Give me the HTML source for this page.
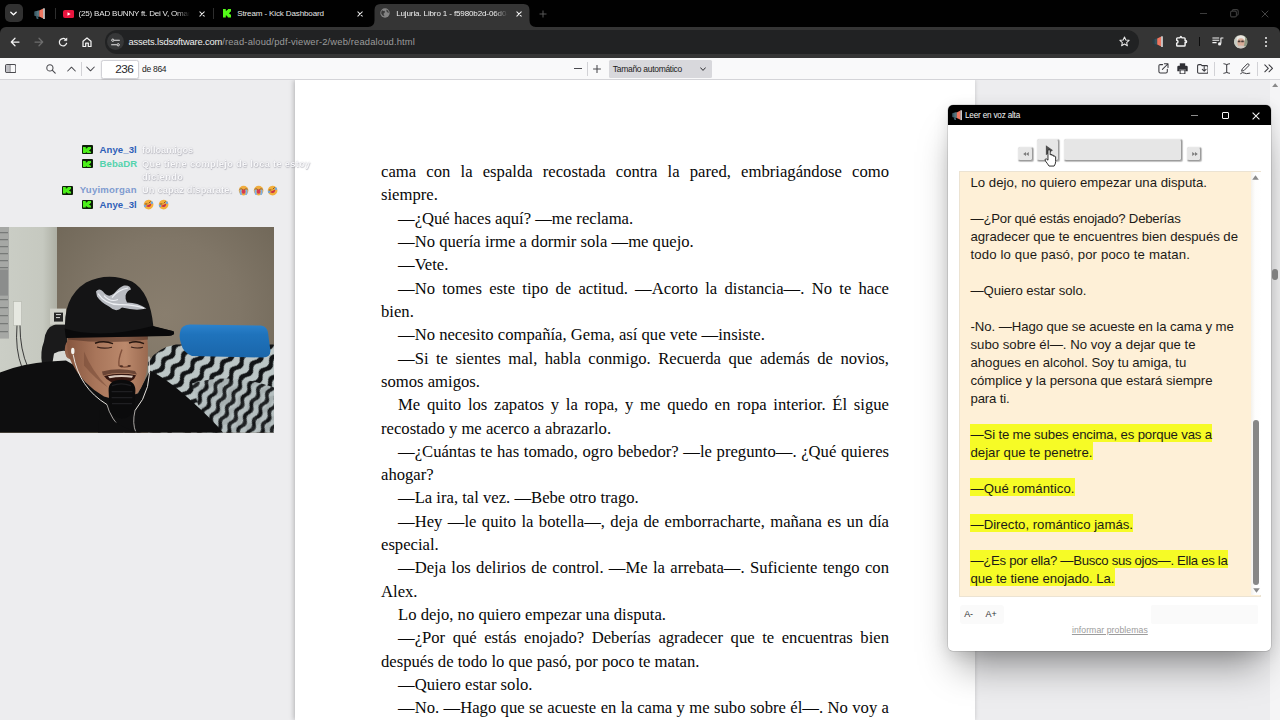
<!DOCTYPE html>
<html lang="es">
<head>
<meta charset="utf-8">
<title>Lujuria. Libro 1</title>
<style>
*{box-sizing:border-box;margin:0;padding:0}
html,body{width:1280px;height:720px;overflow:hidden;background:#ededef;font-family:"Liberation Sans",sans-serif;}
.abs{position:absolute}
#tabbar{position:absolute;left:0;top:0;width:1280px;height:36px;background:#010101;}
#toolbar{position:absolute;left:0;top:27px;width:1280px;height:30.6px;background:#353535;border-radius:6px 6px 0 0;z-index:3;}
#urlpill{position:absolute;left:105.3px;top:3.1px;width:1033.4px;height:23.6px;border-radius:12px;background:#212223;}
#pdfbar{position:absolute;left:0;top:57px;width:1280px;height:22.6px;background:#f9f9fa;border-bottom:1px solid #d4d4d8;}
#viewer{position:absolute;left:0;top:80px;width:1280px;height:640px;background:#ededef;overflow:hidden;}
#page{position:absolute;left:295px;top:0;width:680px;height:640px;background:#fff;box-shadow:-1px 0 5px rgba(0,0,0,.25);}
#ptext{position:absolute;left:86px;top:79.9px;width:508px;font-family:"Liberation Serif",serif;font-size:16.65px;line-height:23.33px;color:#080808;text-align:justify;}
#ptext p{text-indent:17px;text-align:justify;text-align-last:left;}
#ptext p.j{text-align-last:justify;}
#ptext p.n{text-indent:0}
.tabtxt{position:absolute;top:8.6px;font-size:8.05px;letter-spacing:-.14px;line-height:10px;color:#e6e6e6;white-space:nowrap;overflow:hidden;-webkit-mask-image:linear-gradient(90deg,#000 0,#000 calc(100% - 14px),transparent 100%);mask-image:linear-gradient(90deg,#000 0,#000 calc(100% - 14px),transparent 100%)}
#t2{-webkit-mask-image:none;mask-image:none}

#popup{position:absolute;left:948.4px;top:105px;width:322.7px;height:545.5px;background:#fff;border-radius:5px;box-shadow:0 0 0 .5px rgba(0,0,0,.2),0 24px 36px -10px rgba(0,0,0,.40),0 3px 16px rgba(0,0,0,.11);overflow:hidden;}
#ptitle{position:absolute;left:0;top:0;width:100%;height:20px;background:#000;}
#ta{position:absolute;left:10.3px;top:66px;width:302.6px;height:425.6px;background:#fef0d7;border:1px solid #ece3d2;}
#tatext{position:absolute;left:10.8px;top:0;font-size:13.2px;line-height:18px;color:#1c1a16;white-space:nowrap;}
#tatext div{height:18px;white-space:nowrap;width:fit-content}
#tatext div.h{background:#f6fb26;margin-left:-.5px;padding:0 .5px}
#tatext span{position:relative;top:1.8px}
#tatext div.b{height:18px}
.pbtn{position:absolute;background:#e6e6e6;border:1px solid #e8e8e8;border-right-color:#9c9c9c;border-bottom-color:#9c9c9c;border-radius:2.5px;box-shadow:.5px .5px 1px rgba(0,0,0,.25)}

.kb{position:absolute;width:11px;height:9px;background:#0d1f08;border-radius:1px}
.kb svg{position:absolute;left:1.6px;top:1.3px}
.cn{position:absolute;font-weight:bold;font-size:9.6px;line-height:12px;white-space:nowrap;letter-spacing:.05px;text-align:right}
.cm{position:absolute;font-weight:bold;font-size:9.3px;line-height:12px;white-space:nowrap;color:#f7f7f9;text-shadow:0 0 1.2px rgba(110,110,125,.42),.4px .5px .9px rgba(110,110,125,.34);letter-spacing:-.1px;filter:blur(.35px)}
</style>
</head>
<body>
<div id="tabbar">
  <!-- tab search button -->
  <div class="abs" style="left:4.5px;top:4px;width:18px;height:18px;border-radius:5px;background:#313131"></div>
  <svg class="abs" style="left:9px;top:9px" width="9" height="9" viewBox="0 0 9 9"><path d="M1.8 3.2 L4.5 5.8 L7.2 3.2" fill="none" stroke="#fff" stroke-width="1.3" stroke-linecap="round" stroke-linejoin="round"/></svg>
  <!-- pinned megaphone -->
  <svg class="abs" style="left:34px;top:7.5px" width="12" height="12" viewBox="0 0 12 12">
    <path d="M0.3 4 Q0.3 3.3 1 3.2 L5.2 2.5 L5.2 8.7 L1 8 Q0.3 7.9 0.3 7.2 Z" fill="#3f5f6b"/>
    <path d="M2.6 2.95 L5.2 2.5 L5.2 8.7 L2.6 8.25 Z" fill="#54757f"/>
    <path d="M5.2 2.6 L9.3 0.6 L9.3 10.6 L5.2 8.6 Z" fill="#ee7660"/>
    <rect x="9.3" y="0.3" width="1.4" height="10.7" fill="#f6f6f6"/>
    <path d="M1.8 8.1 L4 8.5 L4.5 11 L2.8 11 Z" fill="#3f5f6b"/>
  </svg>
  <div class="abs" style="left:54.5px;top:8px;width:1px;height:10.5px;background:#2e2e2e"></div>
  <!-- youtube -->
  <svg class="abs" style="left:62.7px;top:9.8px" width="11.4" height="8" viewBox="0 0 114 80"><rect x="0" y="0" width="114" height="80" rx="20" fill="#e8153e"/><path d="M45 22 L45 58 L76 40 Z" fill="#fff"/></svg>
  <div class="tabtxt" id="t1" style="left:78.6px;width:111px;letter-spacing:-.21px">(25) BAD BUNNY ft. Dei V, Omar Courtz</div>
  <svg class="abs xx" style="left:198.65px;top:10.85px" width="6.1" height="6.1" viewBox="0 0 7 7"><path d="M1 1 L6 6 M6 1 L1 6" stroke="#e6e6e6" stroke-width="1.15" stroke-linecap="round"/></svg>
  <div class="abs" style="left:213.3px;top:8px;width:1px;height:10.5px;background:#2e2e2e"></div>
  <!-- kick -->
  <svg class="abs" style="left:223px;top:9.3px" width="8" height="8.4" viewBox="0 0 80 84"><path d="M0 0 H28 V18 H38 V9 H48 V0 H80 V28 H70 V37 H60 V47 H70 V56 H80 V84 H48 V75 H38 V66 H28 V84 H0 Z" fill="#53fc18"/></svg>
  <div class="tabtxt" id="t2" style="left:237.2px;">Stream - Kick Dashboard</div>
  <svg class="abs xx" style="left:357.05px;top:10.85px" width="6.1" height="6.1" viewBox="0 0 7 7"><path d="M1 1 L6 6 M6 1 L1 6" stroke="#e6e6e6" stroke-width="1.15" stroke-linecap="round"/></svg>
  <!-- active tab -->
  <svg class="abs" style="left:368px;top:3px" width="168" height="24" viewBox="0 0 168 24"><path d="M0 24 Q6.5 24 6.5 17.5 V7 Q6.5 1 12.5 1 H155.5 Q161.5 1 161.5 7 V17.5 Q161.5 24 168 24 Z" fill="#353535"/></svg>
  <svg class="abs" style="left:380.3px;top:8.4px" width="10" height="10" viewBox="0 0 10 10"><circle cx="5" cy="5" r="4.7" fill="#848484"/><path d="M2.1 2.3 Q3.4 3.2 4.6 2.7 Q5.4 3.9 4.4 4.9 Q3.3 5.2 3.6 6.4 Q4.6 6.9 4.2 8.3 Q2 7.6 1.2 5.6 Q1 3.6 2.1 2.3 Z M6.4 1.4 Q8.6 2.4 8.9 4.6 Q7.6 5.2 7.2 4.0 Q6.0 3.4 6.4 1.4 Z" fill="#3a3a3a"/></svg>
  <div class="tabtxt" id="t3" style="left:396.2px;width:112px;color:#f1f1f1">Lujuria. Libro 1 - f5980b2d-06d0-4a</div>
  <svg class="abs xx" style="left:515.55px;top:10.85px" width="6.1" height="6.1" viewBox="0 0 7 7"><path d="M1 1 L6 6 M6 1 L1 6" stroke="#f2f2f2" stroke-width="1.2" stroke-linecap="round"/></svg>
  <svg class="abs" style="left:538.5px;top:9.5px" width="8" height="8" viewBox="0 0 8 8"><path d="M4 0.5 V7.5 M0.5 4 H7.5" stroke="#585858" stroke-width="1"/></svg>
  <!-- window controls -->
  <div class="abs" style="left:1200px;top:12.5px;width:7px;height:1px;background:#3c3c3c"></div>
  <svg class="abs" style="left:1229.5px;top:9.3px" width="9" height="8.5" viewBox="0 0 9 8.5"><rect x="0.6" y="2.1" width="5.8" height="5.8" rx="1.4" fill="none" stroke="#3c3c3c" stroke-width="1.1"/><path d="M2.4 2 V1.8 Q2.4 0.6 3.6 0.6 H6.8 Q8.2 0.6 8.2 2 V5 Q8.2 6.2 7 6.2" fill="none" stroke="#3c3c3c" stroke-width="1.1"/></svg>
  <svg class="abs" style="left:1261px;top:9.6px" width="8" height="8" viewBox="0 0 8 8"><path d="M0.7 0.7 L7.3 7.3 M7.3 0.7 L0.7 7.3" stroke="#444" stroke-width="1"/></svg>
</div>
<div id="toolbar">
  <div id="urlpill"></div>
  <!-- back -->
  <svg class="abs" style="left:9.8px;top:9.9px" width="10" height="10" viewBox="0 0 10 10"><path d="M9 5 H1.5 M5 1.2 L1.3 5 L5 8.8" fill="none" stroke="#f2f2f2" stroke-width="1.25" stroke-linecap="round" stroke-linejoin="round"/></svg>
  <!-- forward -->
  <svg class="abs" style="left:33.7px;top:9.9px" width="10" height="10" viewBox="0 0 10 10"><path d="M1 5 H8.5 M5 1.2 L8.7 5 L5 8.8" fill="none" stroke="#6d6d6d" stroke-width="1.25" stroke-linecap="round" stroke-linejoin="round"/></svg>
  <!-- reload -->
  <svg class="abs" style="left:57.8px;top:9.6px" width="10.4" height="10.4" viewBox="0 0 10.4 10.4"><path d="M8.6 6.3 A3.7 3.7 0 1 1 7.6 2.5" fill="none" stroke="#f2f2f2" stroke-width="1.25" stroke-linecap="round"/><path d="M8.9 0.9 V3.6 H6.2 Z" fill="#f2f2f2" stroke="#f2f2f2" stroke-width="0.6" stroke-linejoin="round"/></svg>
  <!-- home -->
  <svg class="abs" style="left:81.6px;top:9.6px" width="10" height="10.4" viewBox="0 0 10 10.4"><path d="M1 9.6 V4.2 L5 0.9 L9 4.2 V9.6 H6.3 V6.1 H3.7 V9.6 Z" fill="none" stroke="#f2f2f2" stroke-width="1.25" stroke-linejoin="round"/></svg>
  <!-- site settings -->
  <div class="abs" style="left:106.5px;top:6.4px;width:17px;height:17px;border-radius:50%;background:#363738"></div>
  <svg class="abs" style="left:110.5px;top:10.6px" width="9" height="9" viewBox="0 0 9 9"><path d="M3.6 2.2 H8.4 M0.6 6.8 H5.4" stroke="#e8e8e8" stroke-width="1.05" stroke-linecap="round"/><circle cx="1.8" cy="2.2" r="1.15" fill="none" stroke="#e8e8e8" stroke-width="0.95"/><circle cx="7.2" cy="6.8" r="1.15" fill="none" stroke="#e8e8e8" stroke-width="0.95"/></svg>
  <div class="abs" id="url" style="left:128.5px;top:9.4px;font-size:9.4px;color:#efefef;white-space:nowrap;letter-spacing:-.17px">assets.lsdsoftware.com<span style="color:#9b9b9b;letter-spacing:.158px">/read-aloud/pdf-viewer-2/web/readaloud.html</span></div>
  <!-- star -->
  <svg class="abs" style="left:1118.5px;top:9.2px" width="11" height="11" viewBox="0 0 11 11"><path d="M5.5 1 L6.85 4.05 L10.1 4.35 L7.65 6.55 L8.4 9.8 L5.5 8.05 L2.6 9.8 L3.35 6.55 L0.9 4.35 L4.15 4.05 Z" fill="none" stroke="#e8e8e8" stroke-width="1.05" stroke-linejoin="round"/></svg>
  <!-- extension megaphone -->
  <svg class="abs" style="left:1151.5px;top:8.8px" width="12" height="12" viewBox="0 0 12 12">
    <path d="M0.3 4 Q0.3 3.3 1 3.2 L5.2 2.5 L5.2 8.7 L1 8 Q0.3 7.9 0.3 7.2 Z" fill="#293a41"/>
    <path d="M2.6 2.95 L5.2 2.5 L5.2 8.7 L2.6 8.25 Z" fill="#33505b"/>
    <path d="M5.2 2.6 L9.3 0.6 L9.3 10.6 L5.2 8.6 Z" fill="#ee7660"/>
    <rect x="9.3" y="0.3" width="1.4" height="10.7" fill="#f6f6f6"/>
    <path d="M1.8 8.1 L4 8.5 L4.5 11 L2.8 11 Z" fill="#293a41"/>
  </svg>
  <!-- puzzle -->
  <svg class="abs" style="left:1175.3px;top:8px" width="12.6" height="12.4" viewBox="0 0 12.6 12.4"><path d="M2.5 2.9 H4.8 L5.9 1.5 L7 2.9 H9.3 Q10.1 2.9 10.1 3.7 V5.7 H10.9 Q11.5 5.7 11.5 6.3 V7 Q11.5 7.6 10.9 7.6 H10.1 V10.3 Q10.1 11.1 9.3 11.1 H2.5 Q1.7 11.1 1.7 10.3 V8.2 Q3 7.9 3 6.75 Q3 5.6 1.7 5.3 V3.7 Q1.7 2.9 2.5 2.9 Z" fill="none" stroke="#f4f4f4" stroke-width="1.45" stroke-linejoin="round"/></svg>
  <div class="abs" style="left:1198.8px;top:10.3px;width:1.3px;height:9.2px;background:#0c0c0c"></div>
  <!-- media -->
  <svg class="abs" style="left:1211.8px;top:9.8px" width="12" height="9" viewBox="0 0 12 9"><path d="M0.4 1 H7.2 M0.4 3.3 H7.2 M0.4 5.6 H4.6" stroke="#f2f2f2" stroke-width="1.05"/><path d="M8.6 1 H11.4 M8.9 1 V6.6" stroke="#f2f2f2" stroke-width="1.1"/><circle cx="7.6" cy="6.9" r="1.6" fill="#f2f2f2"/></svg>
  <!-- avatar -->
  <svg class="abs" style="left:1234.2px;top:8.1px" width="13.6" height="13.6" viewBox="0 0 13.6 13.6"><defs><clipPath id="avc"><circle cx="6.8" cy="6.8" r="6.8"/></clipPath></defs><g clip-path="url(#avc)"><rect width="13.6" height="13.6" fill="#b9b8a8"/><rect x="0" y="0" width="4" height="13.6" fill="#c9cdc4"/><rect x="10" y="0" width="3.6" height="13.6" fill="#8f9a84"/><ellipse cx="6.9" cy="3.6" rx="4.3" ry="3.2" fill="#e9e6e0"/><ellipse cx="6.9" cy="7.6" rx="3.6" ry="4.4" fill="#d9ad98"/><rect x="3.9" y="5.6" width="2.6" height="1.7" rx=".6" fill="#4a3d38"/><rect x="7.2" y="5.6" width="2.6" height="1.7" rx=".6" fill="#4a3d38"/><ellipse cx="6.9" cy="13" rx="5.5" ry="2.6" fill="#cfc9c2"/></g></svg>
  <!-- kebab -->
  <div class="abs" style="left:1264.5px;top:10.2px;width:2px;height:2px;border-radius:50%;background:#f2f2f2;box-shadow:0 4px 0 #f2f2f2,0 8px 0 #f2f2f2"></div>
</div>
<div id="pdfbar">
  <!-- sidebar toggle -->
  <svg class="abs" style="left:5px;top:7.2px" width="11.4" height="9.2" viewBox="0 0 11.4 9.2"><rect x="0.55" y="0.55" width="10.3" height="8.1" rx="1.5" fill="none" stroke="#4a4a4f" stroke-width="1.05"/><path d="M4.9 0.6 V8.6" stroke="#4a4a4f" stroke-width="1"/><rect x="1.1" y="1.1" width="3.6" height="7" fill="#bdbdc2"/></svg>
  <!-- search -->
  <svg class="abs" style="left:46px;top:6.8px" width="10" height="10" viewBox="0 0 10 10"><circle cx="3.9" cy="3.9" r="3.1" fill="none" stroke="#4a4a4f" stroke-width="1.05"/><path d="M6.2 6.2 L9.2 9.2" stroke="#4a4a4f" stroke-width="1.15" stroke-linecap="round"/></svg>
  <!-- up/down -->
  <svg class="abs" style="left:66.6px;top:9px" width="9" height="6" viewBox="0 0 9 6"><path d="M0.7 5 L4.5 1.2 L8.3 5" fill="none" stroke="#4a4a4f" stroke-width="1.05" stroke-linecap="round" stroke-linejoin="round"/></svg>
  <div class="abs" style="left:80.8px;top:5px;width:1px;height:13.5px;background:#d2d2d6"></div>
  <svg class="abs" style="left:86px;top:9px" width="9" height="6" viewBox="0 0 9 6"><path d="M0.7 1 L4.5 4.8 L8.3 1" fill="none" stroke="#4a4a4f" stroke-width="1.05" stroke-linecap="round" stroke-linejoin="round"/></svg>
  <div class="abs" style="left:101.2px;top:3.2px;width:37.4px;height:18.6px;border:1px solid #d2d2d7;border-radius:2.5px;background:#fff;box-shadow:0 0.5px 1.5px rgba(0,0,0,.12)"></div>
  <div class="abs" id="pgnum" style="left:115.3px;top:4.6px;font-size:11.8px;color:#2a2a2e;letter-spacing:-.55px">236</div>
  <div class="abs" id="pgof" style="left:142px;top:7.2px;font-size:8.5px;color:#222;letter-spacing:-.28px">de 864</div>
  <!-- zoom -->
  <div class="abs" style="left:574px;top:11.3px;width:7.8px;height:1.05px;background:#4a4a4f"></div>
  <div class="abs" style="left:587.3px;top:5px;width:1px;height:13.5px;background:#d2d2d6"></div>
  <svg class="abs" style="left:593px;top:7.8px" width="8" height="8" viewBox="0 0 8 8"><path d="M4 0.1 V7.9 M0.1 4 H7.9" stroke="#4a4a4f" stroke-width="1.05"/></svg>
  <div class="abs" style="left:608.5px;top:3px;width:103.5px;height:17.6px;background:#d8d8dc;border-radius:1.5px"></div>
  <div class="abs" id="zoomsel" style="left:612.8px;top:6.9px;font-size:8.5px;color:#1c1c20;letter-spacing:-.3px;white-space:nowrap">Tamaño automático</div>
  <svg class="abs" style="left:699.5px;top:9.6px" width="6" height="4.4" viewBox="0 0 6 4.4"><path d="M0.6 0.8 L3 3.4 L5.4 0.8" fill="none" stroke="#2a2a2e" stroke-width="1" stroke-linecap="round" stroke-linejoin="round"/></svg>
  <!-- right icons -->
  <svg class="abs" style="left:1157.6px;top:6.4px" width="11" height="11" viewBox="0 0 11 11"><path d="M4.6 1.6 H2.4 Q0.9 1.6 0.9 3.1 V8.4 Q0.9 9.9 2.4 9.9 H7.8 Q9.3 9.9 9.3 8.4 V6.3" fill="none" stroke="#3a3a3f" stroke-width="1.05" stroke-linecap="round"/><path d="M4.4 6.4 L9.8 1 M6.4 0.8 H10 V4.4" fill="none" stroke="#3a3a3f" stroke-width="1.05" stroke-linecap="round" stroke-linejoin="round"/></svg>
  <svg class="abs" style="left:1177.3px;top:6px" width="11" height="11.4" viewBox="0 0 11 11.4"><path d="M2.8 0.3 H8.2 V3 H2.8 Z" fill="#2f2f34"/><path d="M1.6 2.8 H9.4 Q10.7 2.8 10.7 4.1 V8.2 H8.4 V6.3 H2.6 V8.2 H0.3 V4.1 Q0.3 2.8 1.6 2.8 Z" fill="#2f2f34"/><rect x="3.1" y="6.9" width="4.8" height="4" fill="none" stroke="#2f2f34" stroke-width="1"/></svg>
  <svg class="abs" style="left:1196.8px;top:7px" width="11.6" height="10" viewBox="0 0 11.6 10"><path d="M0.6 1.9 Q0.6 0.6 1.9 0.6 H4 L5 1.6 H9.7 Q11 1.6 11 2.9 V8 Q11 9.3 9.7 9.3 H1.9 Q0.6 9.3 0.6 8 Z" fill="none" stroke="#3a3a3f" stroke-width="1.05" stroke-linejoin="round"/><path d="M7.2 2.6 V7 M5.3 5.3 L7.2 7.2 L9.1 5.3" fill="none" stroke="#3a3a3f" stroke-width="1.05" stroke-linecap="round" stroke-linejoin="round"/></svg>
  <div class="abs" style="left:1214.2px;top:4.5px;width:1px;height:14.3px;background:#d2d2d6"></div>
  <svg class="abs" style="left:1223px;top:6.4px" width="7.4" height="11" viewBox="0 0 7.4 11"><path d="M0.8 0.8 Q3 0.9 3.7 2 Q4.4 0.9 6.6 0.8 M3.7 2 V9 M0.8 10.2 Q3 10.1 3.7 9 Q4.4 10.1 6.6 10.2" fill="none" stroke="#3a3a3f" stroke-width="1.05" stroke-linecap="round"/></svg>
  <svg class="abs" style="left:1240.2px;top:6.2px" width="10.6" height="11.6" viewBox="0 0 10.6 11.6"><path d="M1.6 8.2 L2.2 6 L7.1 1.1 Q7.9 0.4 8.7 1.1 Q9.5 1.9 8.8 2.7 L3.9 7.6 Z" fill="none" stroke="#3a3a3f" stroke-width="1" stroke-linejoin="round"/><path d="M0.6 10.6 Q2.6 8.8 4.2 10 Q5.8 11.2 9.8 10.2" fill="none" stroke="#3a3a3f" stroke-width="1" stroke-linecap="round"/></svg>
  <div class="abs" style="left:1257.2px;top:4.5px;width:1px;height:14.3px;background:#d2d2d6"></div>
  <svg class="abs" style="left:1264.4px;top:7.4px" width="9.6" height="8.6" viewBox="0 0 9.6 8.6"><path d="M0.8 0.8 L4.3 4.3 L0.8 7.8 M5 0.8 L8.5 4.3 L5 7.8" fill="none" stroke="#3a3a3f" stroke-width="1.05" stroke-linecap="round" stroke-linejoin="round"/></svg>
</div>
<div id="viewer">
  <div class="abs" style="left:1270px;top:0;width:10px;height:640px;background:#f5f5f6"></div>
  <svg class="abs" style="left:1272px;top:3.2px" width="6.4" height="4.2" viewBox="0 0 6.4 4.2"><path d="M3.2 0.2 L6.3 4 H0.1 Z" fill="#8a8a8a"/></svg>
  <div class="abs" style="left:1272px;top:188.8px;width:6px;height:10.8px;border-radius:3px;background:#7f7f7f;z-index:20"></div>
  <div id="page">
    <div id="ptext">
<p class="n j">cama con la espalda recostada contra la pared, embriagándose como</p>
<p class="n">siempre.</p>
<p>—¿Qué haces aquí? —me reclama.</p>
<p>—No quería irme a dormir sola —me quejo.</p>
<p>—Vete.</p>
<p class="j">—No tomes este tipo de actitud. —Acorto la distancia—. No te hace</p>
<p class="n">bien.</p>
<p>—No necesito compañía, Gema, así que vete —insiste.</p>
<p class="j">—Si te sientes mal, habla conmigo. Recuerda que además de novios,</p>
<p class="n">somos amigos.</p>
<p class="j">Me quito los zapatos y la ropa, y me quedo en ropa interior. Él sigue</p>
<p class="n">recostado y me acerco a abrazarlo.</p>
<p class="j">—¿Cuántas te has tomado, ogro bebedor? —le pregunto—. ¿Qué quieres</p>
<p class="n">ahogar?</p>
<p>—La ira, tal vez. —Bebe otro trago.</p>
<p class="j">—Hey —le quito la botella—, deja de emborracharte, mañana es un día</p>
<p class="n">especial.</p>
<p class="j">—Deja los delirios de control. —Me la arrebata—. Suficiente tengo con</p>
<p class="n">Alex.</p>
<p>Lo dejo, no quiero empezar una disputa.</p>
<p class="j">—¿Por qué estás enojado? Deberías agradecer que te encuentras bien</p>
<p class="n">después de todo lo que pasó, por poco te matan.</p>
<p>—Quiero estar solo.</p>
<p class="j">—No. —Hago que se acueste en la cama y me subo sobre él—. No voy a</p>
    </div>
  </div>
</div>
<div id="chat">
  <div class="kb" style="left:81.8px;top:145.4px"><svg width="8" height="6.6" viewBox="0 0 80 84" preserveAspectRatio="none"><path d="M0 0 H28 V18 H38 V9 H48 V0 H80 V28 H70 V37 H60 V47 H70 V56 H80 V84 H48 V75 H38 V66 H28 V84 H0 Z" fill="#4cf01a"/></svg></div>
  <div class="cn" style="left:99.6px;top:143.8px;color:#2f5fb8">Anye_3l</div>
  <div class="cm" id="m1" style="left:142px;top:143.8px">folloamigos</div>
  <div class="kb" style="left:81.8px;top:159.4px"><svg width="8" height="6.6" viewBox="0 0 80 84" preserveAspectRatio="none"><path d="M0 0 H28 V18 H38 V9 H48 V0 H80 V28 H70 V37 H60 V47 H70 V56 H80 V84 H48 V75 H38 V66 H28 V84 H0 Z" fill="#4cf01a"/></svg></div>
  <div class="cn" style="left:99.6px;top:157.8px;color:#55d3ad">BebaDR</div>
  <div class="cm" id="m2" style="left:142px;top:157.8px;letter-spacing:.3px">Que tiene complejo de loca te estoy</div>
  <div class="cm" id="m3" style="left:142px;top:170.6px;letter-spacing:.4px">diciendo</div>
  <div class="kb" style="left:61.8px;top:186px"><svg width="8" height="6.6" viewBox="0 0 80 84" preserveAspectRatio="none"><path d="M0 0 H28 V18 H38 V9 H48 V0 H80 V28 H70 V37 H60 V47 H70 V56 H80 V84 H48 V75 H38 V66 H28 V84 H0 Z" fill="#4cf01a"/></svg></div>
  <div class="cn" style="left:79.8px;top:184.4px;color:#7f9bd0;letter-spacing:.2px">Yuyimorgan</div>
  <div class="cm" id="m4" style="left:142px;top:184.4px;letter-spacing:.16px">Un capaz disparate.</div>
  <svg class="abs" style="left:238.4px;top:185.0px" width="11.2" height="11.2" viewBox="0 0 20 20"><circle cx="10" cy="10" r="8.6" fill="#f0ad3e"/><ellipse cx="10" cy="11.6" rx="3.4" ry="4" fill="#d63a52"/><path d="M3.4 7.4 Q6 6 8 7.6 M16.6 7.4 Q14 6 12 7.6" stroke="#6b3a1a" stroke-width="1.3" fill="none" stroke-linecap="round"/><path d="M3.2 8 Q2.2 14 4.4 18 L7 18 Q5.4 13 6.4 8.4 Z M16.8 8 Q17.8 14 15.6 18 L13 18 Q14.6 13 13.6 8.4 Z" fill="#7bb0ea"/></svg><svg class="abs" style="left:252.9px;top:185.0px" width="11.2" height="11.2" viewBox="0 0 20 20"><circle cx="10" cy="10" r="8.6" fill="#f0ad3e"/><ellipse cx="10" cy="11.6" rx="3.4" ry="4" fill="#d63a52"/><path d="M3.4 7.4 Q6 6 8 7.6 M16.6 7.4 Q14 6 12 7.6" stroke="#6b3a1a" stroke-width="1.3" fill="none" stroke-linecap="round"/><path d="M3.2 8 Q2.2 14 4.4 18 L7 18 Q5.4 13 6.4 8.4 Z M16.8 8 Q17.8 14 15.6 18 L13 18 Q14.6 13 13.6 8.4 Z" fill="#7bb0ea"/></svg><svg class="abs" style="left:267.4px;top:185.0px" width="11.2" height="11.2" viewBox="0 0 20 20"><g transform="rotate(-25 10 10)"><circle cx="10" cy="10" r="8.6" fill="#f3b03c"/><path d="M4.6 10.2 Q10 18.4 15.4 10.2 Z" fill="#c93048"/><path d="M5 6.6 L8 7.8 M15 6.6 L12 7.8" stroke="#6b3a1a" stroke-width="1.3" stroke-linecap="round"/><ellipse cx="3.2" cy="9.4" rx="1.9" ry="2.4" fill="#6aa7e8"/><ellipse cx="16.8" cy="9.4" rx="1.9" ry="2.4" fill="#6aa7e8"/></g></svg>
  <div class="kb" style="left:81.8px;top:200.2px"><svg width="8" height="6.6" viewBox="0 0 80 84" preserveAspectRatio="none"><path d="M0 0 H28 V18 H38 V9 H48 V0 H80 V28 H70 V37 H60 V47 H70 V56 H80 V84 H48 V75 H38 V66 H28 V84 H0 Z" fill="#4cf01a"/></svg></div>
  <div class="cn" style="left:99.6px;top:198.6px;color:#2f5fb8">Anye_3l</div>
  <svg class="abs" style="left:143.4px;top:199.20000000000002px" width="11.2" height="11.2" viewBox="0 0 20 20"><g transform="rotate(-25 10 10)"><circle cx="10" cy="10" r="8.6" fill="#f3b03c"/><path d="M4.6 10.2 Q10 18.4 15.4 10.2 Z" fill="#c93048"/><path d="M5 6.6 L8 7.8 M15 6.6 L12 7.8" stroke="#6b3a1a" stroke-width="1.3" stroke-linecap="round"/><ellipse cx="3.2" cy="9.4" rx="1.9" ry="2.4" fill="#6aa7e8"/><ellipse cx="16.8" cy="9.4" rx="1.9" ry="2.4" fill="#6aa7e8"/></g></svg><svg class="abs" style="left:158.20000000000002px;top:199.20000000000002px" width="11.2" height="11.2" viewBox="0 0 20 20"><g transform="rotate(-25 10 10)"><circle cx="10" cy="10" r="8.6" fill="#f3b03c"/><path d="M4.6 10.2 Q10 18.4 15.4 10.2 Z" fill="#c93048"/><path d="M5 6.6 L8 7.8 M15 6.6 L12 7.8" stroke="#6b3a1a" stroke-width="1.3" stroke-linecap="round"/><ellipse cx="3.2" cy="9.4" rx="1.9" ry="2.4" fill="#6aa7e8"/><ellipse cx="16.8" cy="9.4" rx="1.9" ry="2.4" fill="#6aa7e8"/></g></svg>
</div>
<div id="cam" class="abs" style="left:0;top:227.4px;width:274.4px;height:205.4px;overflow:hidden;background:#85796a">
<svg width="274.4" height="205.4" viewBox="0 227.4 274.4 205.4" preserveAspectRatio="none" style="filter:blur(.55px)">
  <defs>
    <radialGradient id="wall" cx="165" cy="315" r="150" gradientUnits="userSpaceOnUse"><stop offset="0" stop-color="#897e6e"/><stop offset=".5" stop-color="#807667"/><stop offset="1" stop-color="#6f6657"/></radialGradient>
    <linearGradient id="lw" x1="0" y1="0" x2="1" y2="0"><stop offset="0" stop-color="#cbcec6"/><stop offset=".75" stop-color="#c6c9c0"/><stop offset="1" stop-color="#adafa4"/></linearGradient>
    <linearGradient id="skin" x1="0" y1="0" x2="1" y2="0"><stop offset="0" stop-color="#86563f"/><stop offset=".35" stop-color="#a8755a"/><stop offset=".72" stop-color="#bb896c"/><stop offset="1" stop-color="#9a694f"/></linearGradient>
    <linearGradient id="pil" x1="0" y1="0" x2="0" y2="1"><stop offset="0" stop-color="#2b82cc"/><stop offset=".3" stop-color="#1f73bc"/><stop offset="1" stop-color="#1a66aa"/></linearGradient>
    <pattern id="zeb" width="17" height="12" patternUnits="userSpaceOnUse" patternTransform="rotate(-52)"><rect width="17" height="12" fill="#bcc6c6"/><path d="M0 2.4 Q4.2 -1.4 8.5 2.4 T17 2.4 V7.4 Q12.8 11.2 8.5 7.4 T0 7.4 Z" fill="#121416"/></pattern>
    <pattern id="zeb2" width="15" height="10" patternUnits="userSpaceOnUse" patternTransform="rotate(-64)"><rect width="15" height="10" fill="#b4bebf"/><path d="M0 2 Q3.8 -1.2 7.5 2 T15 2 V6.2 Q11.2 9.4 7.5 6.2 T0 6.2 Z" fill="#121416"/></pattern>
  </defs>
  <rect x="0" y="227" width="275" height="206" fill="url(#wall)"/>
  <!-- light wall -->
  <rect x="0" y="227" width="57" height="150" fill="url(#lw)"/>
  <!-- window strip -->
  <rect x="0" y="227" width="9" height="112" fill="#a6a8a5"/>
  <path d="M0 233 H8 M0 240 H8 M0 247 H8 M0 254 H8 M0 261 H8 M0 268 H8 M0 300 H8 M0 308 H8 M0 316 H8 M0 324 H8 M0 332 H8" stroke="#777a78" stroke-width="1.3"/>
  <rect x="0" y="270" width="8" height="26" fill="#8b8d8c"/>
  <rect x="13.5" y="302" width="8" height="24" fill="#e6e8e1" stroke="#b4b6ad" stroke-width=".6"/>
  <path d="M17 326 Q15 350 22 368 M20 326 Q20 350 28 368" stroke="#2a2a2a" stroke-width=".9" fill="none"/>
  <!-- dark bag stuff -->
  <path d="M44 342 Q45 328 55 325 Q62 318 67 326 V364 H42 Q40 352 44 342 Z" fill="#1a1a1b"/>
  <rect x="50" y="309" width="16" height="16" fill="#cfd0c8"/><path d="M54 313 H63 V322 H54 Z" fill="#262626"/><path d="M56 315 H61 M56 318 H60" stroke="#ddd" stroke-width="1"/>
  <path d="M54 354 Q62 349 72 353 V366 H52 Z" fill="#d6d8d4"/>
  <!-- bed -->
  <path d="M148 362 Q158 348 176 345 L274.4 345 V433 H148 Z" fill="url(#zeb)"/>
  <path d="M192 384 Q230 372 274.4 388 V433 H206 Z" fill="url(#zeb2)" opacity=".92"/>
  <!-- pillow -->
  <path d="M180.5 331 Q182 325.4 190 325 L261 326 Q267 327 268 333 L270.4 351 Q270.6 357.6 263 358 L192 356.4 Q183 353 181.4 345 Q178.4 338 180.5 331 Z" fill="url(#pil)"/>
  <!-- shirt -->
  <path d="M0 373 Q22 364 50 362 L66 361 L78 368 L104 396 L138 394 L150 371 Q168 380 192 402 Q212 420 223 433 H0 Z" fill="#0e0e0f"/>
  <!-- face -->
  <ellipse cx="69.6" cy="350" rx="4.8" ry="9.4" fill="#93614a"/>
  <path d="M68 335 Q65 352 72 364 Q82 384 104 397 Q120 403 137 394 Q146 384 147.6 364 Q148.6 348 147 334 Z" fill="url(#skin)"/>
  <path d="M68 334 H148 V340 Q110 345 68 340 Z" fill="#4a2e22" opacity=".55"/>
  <path d="M84 352 Q92 372 108 388 Q96 380 84 366 Z" fill="#7a4c38" opacity=".6"/>
  <path d="M95 343.6 Q104 340.6 113 344" stroke="#25150f" stroke-width="1.5" fill="none"/>
  <path d="M129 343.4 Q137 340.8 144 344" stroke="#25150f" stroke-width="1.5" fill="none"/>
  <path d="M97 347.4 Q104 349.6 112 347.6 M131 347.4 Q137 349.4 143 347.6" stroke="#3a221a" stroke-width="1.1" fill="none"/>
  <path d="M122 350 Q118 360 119 366 Q124 369 131 366" stroke="#80503b" stroke-width="1.4" fill="none"/>
  <ellipse cx="121.4" cy="366.6" rx="1.7" ry="1" fill="#4e2e22"/><ellipse cx="129" cy="366.4" rx="1.5" ry=".9" fill="#4e2e22"/>
  <path d="M102 372 Q118 367.4 135 371.4 L137 375 Q118 371.6 103 376 Z" fill="#5a372b" opacity=".8"/>
  <path d="M104 376.4 Q119 372.6 136 375.6 Q134 383 120 384 Q109 384 104 376.4 Z" fill="#33150f"/>
  <path d="M108 376.6 Q120 374.2 133 376.2 L132 378.2 Q120 376.6 109.6 378.6 Z" fill="#d9c8bc"/>
  <!-- earbuds -->
  <ellipse cx="72.8" cy="351.4" rx="1.7" ry="3.2" fill="#f4f4f0"/>
  <path d="M73.2 355 Q79 388 107 405 M149 357 Q153 390 135 411" stroke="#e6e3de" stroke-width="1" fill="none"/>
  <path d="M107 405 Q110 418 124 433 M135 411 Q132 424 136 433" stroke="#cfccc8" stroke-width=".8" fill="none"/>
  <!-- cap -->
  <path d="M65.4 334 Q62 298 86 283 Q108 271.6 132 282 Q150 292 153.4 327 L173.4 331.6 Q176 335.6 169 336.2 L66 337.6 Z" fill="#141415"/>
  <path d="M64.6 329 Q100 340 153 326.4 L173.6 331.6 Q176 335.8 168 336.4 L66 338.4 Z" fill="#09090a"/>
  <path d="M96 292 Q99 288 103 292 Q108 299 114 294 Q120 287 124 286 Q130 285 131 290 Q127 291 125.6 296 Q125 300 127 303 Q138 303 146.4 309 Q136 311.6 122 308 Q116 313.6 109 307 Q101 303 97 297 Z" fill="#b9bcc2"/>
  <path d="M98 294 Q106 306 122 305 Q134 305 144 308.6 M112 298 Q118 290 128 288.4 M104 296 Q110 303 118 300" stroke="#eceef2" stroke-width="1.1" fill="none"/>
  <!-- mic -->
  <path d="M108.6 391 Q108 380.4 121.6 380.2 Q135.6 380.4 135.4 391 L134.4 409 Q131 419 121.6 419 Q110.4 417 109.4 409 Z" fill="#0b0b0c"/>
  <path d="M112 386 Q121 382.6 131 386 M111.6 392 H132.4 M111.6 398 H132.4 M112 404 H132" stroke="#1f1f22" stroke-width="1.2" fill="none"/>
  <path d="M100 410 Q120 430 142 433 H98 Z" fill="#0e0e0f"/>
</svg>
</div>
<div id="popup">
  <div id="ptitle">
    <svg class="abs" style="left:3.2px;top:4.6px" width="11" height="11" viewBox="0 0 12 12">
    <path d="M0.3 4 Q0.3 3.3 1 3.2 L5.2 2.5 L5.2 8.7 L1 8 Q0.3 7.9 0.3 7.2 Z" fill="#3f5f6b"/>
    <path d="M2.6 2.95 L5.2 2.5 L5.2 8.7 L2.6 8.25 Z" fill="#54757f"/>
    <path d="M5.2 2.6 L9.3 0.6 L9.3 10.6 L5.2 8.6 Z" fill="#ee7660"/>
    <rect x="9.3" y="0.3" width="1.4" height="10.7" fill="#f6f6f6"/>
    <path d="M1.8 8.1 L4 8.5 L4.5 11 L2.8 11 Z" fill="#3f5f6b"/>
  </svg>
    <div class="abs" id="ptt" style="left:16.6px;top:6.1px;font-size:8.2px;line-height:10px;color:#f4f4f4;letter-spacing:-.2px;white-space:nowrap">Leer en voz alta</div>
    <div class="abs" style="left:242.6px;top:9.5px;width:7px;height:1.2px;background:#8c8c8c"></div>
    <div class="abs" style="left:273.6px;top:7.3px;width:6.8px;height:6.8px;border:1.1px solid #f4f4f4;border-radius:1px"></div>
    <svg class="abs" style="left:303.6px;top:6.9px" width="8" height="8" viewBox="0 0 8 8"><path d="M0.6 0.6 L7.4 7.4 M7.4 0.6 L0.6 7.4" stroke="#f4f4f4" stroke-width="1.1"/></svg>
  </div>
  <!-- controls -->
  <div class="pbtn" style="left:69.7px;top:41.7px;width:14.8px;height:13.9px"></div>
  <svg class="abs" style="left:74.2px;top:46.6px" width="6" height="4" viewBox="0 0 6 4"><path d="M3 0 V4 L0.2 2 Z M5.8 0 V4 L3 2 Z" fill="#7d7d7d"/></svg>
  <div class="pbtn" style="left:89px;top:34px;width:22px;height:21.6px"></div>
  <svg class="abs" style="left:97px;top:40.2px" width="8.6" height="11" viewBox="0 0 7 10"><path d="M0.4 0.3 L6.8 4.8 L0.4 9.4 Z" fill="#505050"/></svg>
  <div class="pbtn" style="left:115.6px;top:34px;width:117.7px;height:21.6px"></div>
  <div class="pbtn" style="left:238.6px;top:41.7px;width:14.5px;height:13.9px"></div>
  <svg class="abs" style="left:243.4px;top:46.6px" width="6" height="4" viewBox="0 0 6 4"><path d="M0.2 0 V4 L3 2 Z M3 0 V4 L5.8 2 Z" fill="#7d7d7d"/></svg>
  <!-- hand cursor -->
  <svg class="abs" style="left:96px;top:43.6px" width="14.3" height="18.6" viewBox="0 0 13 17"><path d="M3.6 1.6 Q3.6 0.6 4.6 0.6 Q5.6 0.6 5.6 1.6 V5.4 Q6.2 4.6 7.2 5.1 V6 Q7.9 5.3 8.9 5.9 V6.8 Q9.8 6.2 10.6 7.1 V11.4 Q10.6 13.8 9.2 15.6 H4.6 Q3.4 13.8 1.4 11.1 Q0.5 9.8 1.2 9.2 Q2.2 8.6 3.6 10.2 Z" fill="#fff" stroke="#222" stroke-width=".85" stroke-linejoin="round"/></svg>
  <div id="ta">
    <div id="tatext">
<div style="letter-spacing:0.011px"><span>Lo dejo, no quiero empezar una disputa.</span></div>
<div class="b"></div>
<div style="letter-spacing:-0.234px"><span>—¿Por qué estás enojado? Deberías</span></div>
<div style="letter-spacing:-0.037px"><span>agradecer que te encuentres bien después de</span></div>
<div style="letter-spacing:0.130px"><span>todo lo que pasó, por poco te matan.</span></div>
<div class="b"></div>
<div style="letter-spacing:-0.081px"><span>—Quiero estar solo.</span></div>
<div class="b"></div>
<div style="letter-spacing:-0.087px"><span>-No. —Hago que se acueste en la cama y me</span></div>
<div style="letter-spacing:-0.002px"><span>subo sobre él—. No voy a dejar que te</span></div>
<div style="letter-spacing:-0.035px"><span>ahogues en alcohol. Soy tu amiga, tu</span></div>
<div style="letter-spacing:-0.052px"><span>cómplice y la persona que estará siempre</span></div>
<div style="letter-spacing:-0.166px"><span>para ti.</span></div>
<div class="b"></div>
<div class="h" style="letter-spacing:-0.161px"><span>—Si te me subes encima, es porque vas a</span></div>
<div class="h" style="letter-spacing:0.013px"><span>dejar que te penetre.</span></div>
<div class="b"></div>
<div class="h" style="letter-spacing:0.044px"><span>—Qué romántico.</span></div>
<div class="b"></div>
<div class="h" style="letter-spacing:-0.008px"><span>—Directo, romántico jamás.</span></div>
<div class="b"></div>
<div class="h" style="letter-spacing:-0.313px"><span>—¿Es por ella? —Busco sus ojos—. Ella es la</span></div>
<div class="h" style="letter-spacing:-0.048px"><span>que te tiene enojado. La.</span></div>
    </div>
    <!-- inner scrollbar -->
    <div class="abs" style="left:291px;top:0;width:10.5px;height:423px;background:linear-gradient(90deg,#f3f1ec,#fdfdfd 40%,#fff)"></div>
    <svg class="abs" style="left:292.2px;top:2.8px" width="7" height="5" viewBox="0 0 7 5"><path d="M3.5 0.3 L6.8 4.7 H0.2 Z" fill="#8a8a8a"/></svg>
    <div class="abs" style="left:293.6px;top:247.6px;width:5.6px;height:165px;border-radius:3px;background:#878787"></div>
    <svg class="abs" style="left:293px;top:416.4px" width="7" height="5" viewBox="0 0 7 5"><path d="M3.5 4.7 L6.8 0.3 H0.2 Z" fill="#8a8a8a"/></svg>
  </div>
  <!-- bottom -->
  <div class="abs" style="left:11.5px;top:500px;width:44px;height:18.6px;background:#fafafa;border-radius:3px"></div>
  <div class="abs" id="am" style="left:15.8px;top:503.6px;font-size:9px;line-height:10px;color:#333;letter-spacing:-.1px">A-</div>
  <div class="abs" id="ap" style="left:37.2px;top:503.6px;font-size:9px;line-height:10px;color:#333;letter-spacing:-.1px">A+</div>
  <div class="abs" style="left:202.5px;top:500px;width:107px;height:18.6px;background:#fafafa;border-radius:2px"></div>
  <div class="abs" id="inf" style="left:123.5px;top:520.2px;font-size:8.7px;line-height:10px;color:#9c9c9c;text-decoration:underline;white-space:nowrap;letter-spacing:.06px">informar problemas</div>
</div>
</body>
</html>
